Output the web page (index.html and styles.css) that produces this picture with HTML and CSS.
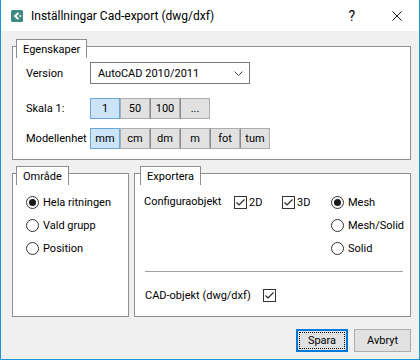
FILE: index.html
```html
<!DOCTYPE html>
<html lang="sv">
<head>
    <meta charset="UTF-8">
    <meta name="viewport" content="width=device-width, initial-scale=1.0">
    <title>Inställningar Cad-export (dwg/dxf)</title>
    <link rel="stylesheet" href="styles.css">
</head>
<body>
    <div class="window">
        <div class="titlebar">
            <svg class="app-icon" width="12" height="12" viewBox="0 0 12 12">
                <rect x="0" y="0" width="12" height="12" rx="1.5" fill="#3f8a80"/>
                <polygon points="6.8,2.2 2.6,6 6.8,9.8 8.2,8.4 5.6,6 8.2,3.6" fill="#fff"/>
                <rect x="8.4" y="5.2" width="1.8" height="1.6" fill="#fff"/>
            </svg>
            <span class="title">Inställningar Cad-export (dwg/dxf)</span>
            <span class="help">?</span>
            <svg class="close" width="10" height="10" viewBox="0 0 10 10">
                <path d="M0.5 0.5 L9.5 9.5 M9.5 0.5 L0.5 9.5" stroke="#1a1a1a" stroke-width="1"/>
            </svg>
        </div>

        <div class="content">
            <div class="group props">
                <div class="tab">Egenskaper</div>
                <div class="row row-version">
                    <span class="label">Version</span>
                    <div class="select">
                        <span>AutoCAD 2010/2011</span>
                        <svg width="9" height="5" viewBox="0 0 9 5">
                            <polyline points="0.5,0.5 4.5,4.5 8.5,0.5" fill="none" stroke="#444" stroke-width="1"/>
                        </svg>
                    </div>
                </div>
                <div class="row row-scale">
                    <span class="label">Skala 1:</span>
                    <div class="seg">
                        <button class="selected">1</button>
                        <button>50</button>
                        <button>100</button>
                        <button>...</button>
                    </div>
                </div>
                <div class="row row-unit">
                    <span class="label">Modellenhet</span>
                    <div class="seg">
                        <button class="selected">mm</button>
                        <button>cm</button>
                        <button>dm</button>
                        <button>m</button>
                        <button>fot</button>
                        <button>tum</button>
                    </div>
                </div>
            </div>

            <div class="lower">
                <div class="group area">
                    <div class="tab">Område</div>
                    <div class="radios">
                        <label class="opt"><span class="radio checked"></span>Hela ritningen</label>
                        <label class="opt"><span class="radio"></span>Vald grupp</label>
                        <label class="opt"><span class="radio"></span>Position</label>
                    </div>
                </div>

                <div class="group export">
                    <div class="tab">Exportera</div>
                    <div class="config">
                        <span class="config-label">Configuraobjekt</span>
                        <label class="opt check-2d"><span class="check"></span>2D</label>
                        <label class="opt check-3d"><span class="check"></span>3D</label>
                        <div class="radios">
                            <label class="opt"><span class="radio checked"></span>Mesh</label>
                            <label class="opt"><span class="radio"></span>Mesh/Solid</label>
                            <label class="opt"><span class="radio"></span>Solid</label>
                        </div>
                    </div>
                    <div class="separator"></div>
                    <div class="cad-row">
                        <span class="cad-label">CAD-objekt (dwg/dxf)</span>
                        <span class="check"></span>
                    </div>
                </div>
            </div>

            <div class="footer">
                <button class="btn default"><span>Spara</span></button>
                <button class="btn">Avbryt</button>
            </div>
        </div>
    </div>
</body>
</html>
```

FILE: styles.css
```css
* { box-sizing: border-box; }
body { margin: 0; font-family: Roboto, "Liberation Sans", Arial, sans-serif; font-size: 11px; color: #000; background: #f0f0f0; }
.window { width: 420px; height: 360px; border: 1px solid #1a96d6; border-top: none; background: #f0f0f0; overflow: hidden; }

.titlebar { height: 31px; background: #fff; display: flex; align-items: center; padding-left: 10px; }
.app-icon { flex: none; }
.title { margin-left: 8px; font-size: 12px; flex: 1; }
.help { font-size: 14px; margin-right: 37px; }
.close { margin-right: 17px; }

.content { padding: 15px 8px 0 11px; }

.group { position: relative; background: #fff; border: 1px solid #8c8e94; }
.tab { position: absolute; top: -8px; left: 3px; height: 19px; padding: 3px 6px 0 6px; background: #fff; border: 1px solid #8c8e94; border-bottom: none; }

.props { height: 114px; padding: 15px 0 0 13px; }
.row { display: flex; align-items: center; }
.label { width: 64px; flex: none; }
.row-scale { margin-top: 14px; }
.row-unit { margin-top: 9px; }

.select { width: 160px; height: 22px; border: 1px solid #7a7a7a; background: #fff; display: flex; align-items: center; justify-content: space-between; padding: 0 6px 0 7px; }
.select svg { margin-top: 1px; }

.seg { display: flex; }
.seg button { width: 30px; height: 21px; padding: 0; margin: 0; font: inherit; background: #e1e1e1; border: 1px solid #adadad; color: #000; }
.seg button + button { border-left-color: #8a8a8a; }
.seg button.selected { background: #cce4f7; border-color: #6aa6d8; }
.seg button.selected + button { border-left-color: #adadad; }

.lower { display: flex; gap: 5px; margin-top: 13px; }
.area { width: 117px; height: 144px; padding: 17px 0 0 13px; }
.export { width: 277px; height: 144px; padding: 17px 7px 0 9px; }
.export .tab { left: 5px; }

.radios { display: flex; flex-direction: column; gap: 1px; }
.opt { display: flex; align-items: center; height: 22px; }
.radio { width: 13px; height: 13px; border: 1px solid #333; border-radius: 50%; background: #fff; margin-right: 4px; flex: none; display: flex; align-items: center; justify-content: center; }
.radio.checked::after { content: ""; width: 7px; height: 7px; border-radius: 50%; background: #1a1a1a; }
.check { width: 13px; height: 13px; border: 1px solid #333; background: #fff; margin-right: 2px; flex: none; background-image: url("data:image/svg+xml;utf8,<svg xmlns='http://www.w3.org/2000/svg' width='11' height='11' viewBox='0 0 11 11'><polyline points='1.5,5.5 4,8 9.5,2.5' fill='none' stroke='%23222' stroke-width='1.1'/></svg>"); background-repeat: no-repeat; background-position: center; }

.config { display: flex; align-items: flex-start; }
.config-label { width: 90px; height: 22px; line-height: 22px; flex: none; }
.check-2d { width: 48px; flex: none; }
.check-3d { width: 49px; flex: none; }

.separator { height: 1px; background: #a0a0a0; margin: 12px 0 0 1px; }
.cad-row { display: flex; align-items: center; height: 22px; margin-top: 12px; padding-left: 1px; }
.cad-label { width: 118px; flex: none; }

.footer { display: flex; justify-content: flex-end; gap: 6px; margin-top: 12px; }
.btn { height: 23px; padding: 0; margin: 0; font: inherit; color: #000; background: #e1e1e1; border: 1px solid #adadad; width: 57px; }
.btn.default { width: 52px; border: 2px solid #0078d7; padding: 1px; }
.btn.default span { display: flex; align-items: center; justify-content: center; height: 100%; border: 1px dotted #000; }
```
